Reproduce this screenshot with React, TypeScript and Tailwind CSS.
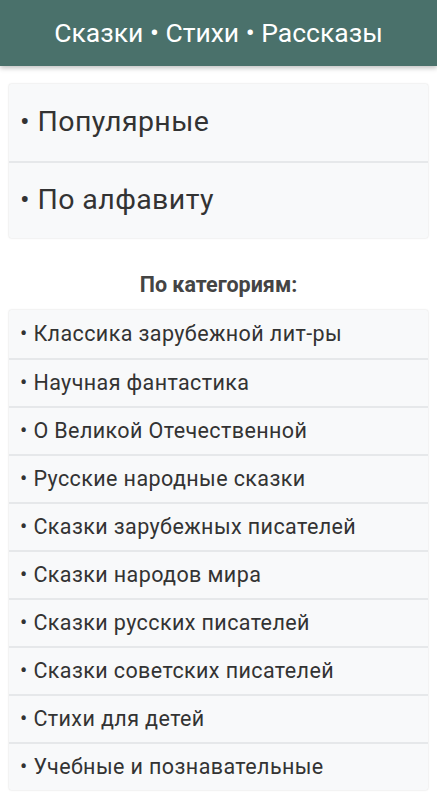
import React from "react";

// ---------------------------------------------------------------------------
// Data
// ---------------------------------------------------------------------------

const MAIN = ["Популярные", "По алфавиту"];

const CATEGORIES = [
  "Классика зарубежной лит-ры",
  "Научная фантастика",
  "О Великой Отечественной",
  "Русские народные сказки",
  "Сказки зарубежных писателей",
  "Сказки народов мира",
  "Сказки русских писателей",
  "Сказки советских писателей",
  "Стихи для детей",
  "Учебные и познавательные",
];

// ---------------------------------------------------------------------------
// Page
// ---------------------------------------------------------------------------

export default function App() {
  return (
    <div
      className="min-h-screen bg-white"
      style={{ fontFamily: "Roboto, 'Noto Sans', sans-serif" }}
    >
      {/* Header */}
      <header className="h-[66px] bg-[#4a716b] flex items-center justify-center shadow-[0_2px_5px_rgba(0,0,0,0.25)] relative z-10">
        <h1 className="text-[26.5px] text-white">Сказки • Стихи • Рассказы</h1>
      </header>

      {/* Main sections */}
      <div className="mx-[9px] mt-[18px] bg-[#f8f9fa] shadow-[0_0_2px_rgba(0,0,0,0.18)] rounded-[2px]">
        {MAIN.map((t, i) => (
          <div
            key={t}
            className={`h-[77px] flex items-center pl-[11px] text-[28.5px] tracking-[0.4px] text-[#333] ${
              i > 0 ? "border-t-2 border-[#e6e8ea]" : ""
            }`}
          >
            • {t}
          </div>
        ))}
      </div>

      <h2 className="mt-[34px] mb-[12px] text-center text-[21.5px] leading-[26px] font-bold text-[#444]">
        По категориям:
      </h2>

      {/* Categories */}
      <div className="mx-[9px] bg-[#f8f9fa] shadow-[0_0_2px_rgba(0,0,0,0.18)] rounded-[2px]">
        {CATEGORIES.map((t, i) => (
          <div
            key={t}
            className={`h-[48px] flex items-center pl-[11px] text-[21.5px] tracking-[0.4px] text-[#333] ${
              i > 0 ? "border-t-2 border-[#e6e8ea]" : ""
            }`}
          >
            • {t}
          </div>
        ))}
      </div>
    </div>
  );
}
